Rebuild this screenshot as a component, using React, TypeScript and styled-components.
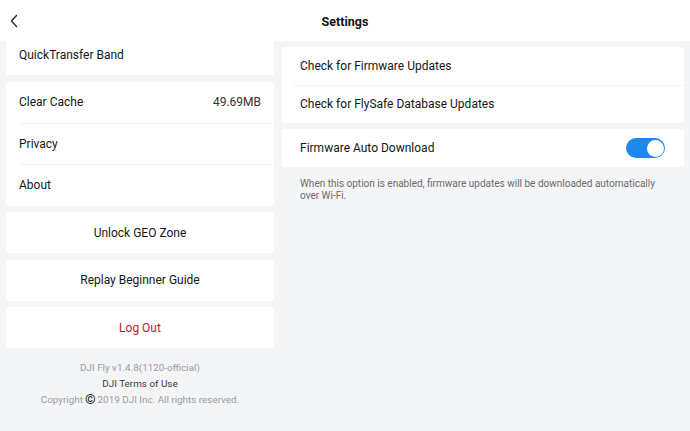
import React, { useState } from "react";
import styled, { createGlobalStyle } from "styled-components";

const Global = createGlobalStyle`
  html, body { margin: 0; padding: 0; background: #f4f5f7; }
  body { font-family: Roboto, "Noto Sans", "Liberation Sans", sans-serif; color: #1a1a1a; -webkit-font-smoothing: antialiased; }
  * { box-sizing: border-box; }
`;

const Page = styled.div`
  width: 690px;
  height: 431px;
  display: flex;
  flex-direction: column;
  background: #f4f5f7;
  overflow: hidden;
`;

const Header = styled.header`
  height: 41px;
  flex: none;
  background: #ffffff;
  display: grid;
  grid-template-columns: 40px 1fr 40px;
  align-items: center;
`;

const BackButton = styled.button`
  border: 0;
  background: none;
  padding: 0 0 0 9px;
  height: 41px;
  display: flex;
  align-items: center;
  cursor: pointer;
`;

const Title = styled.h1`
  margin: 0;
  padding-top: 1px;
  text-align: center;
  font-size: 12.5px;
  font-weight: 700;
  color: #111;
`;

const Body = styled.main`
  flex: 1;
  display: grid;
  grid-template-columns: 268px 402px;
  column-gap: 8px;
  padding: 0 6px;
  min-height: 0;
`;

const LeftScroll = styled.section`
  overflow: hidden;
  display: flex;
  flex-direction: column;
  gap: 6.5px;
  & > :first-child { margin-top: -7px; }
`;

const RightCol = styled.section`
  padding-top: 6px;
  display: flex;
  flex-direction: column;
  gap: 6px;
`;

const Card = styled.div`
  background: #ffffff;
  border-radius: 3px;
  display: flex;
  flex-direction: column;
`;

const Row = styled.div<{ $h?: number; $pad?: number; $inset?: number }>`
  height: ${(p) => p.$h ?? 41.3}px;
  display: flex;
  align-items: center;
  justify-content: space-between;
  padding: 0 ${(p) => p.$pad ?? 13}px;
  font-size: 12px;
  color: #161616;
  position: relative;
  & + &::before {
    content: "";
    position: absolute;
    top: 0;
    left: ${(p) => p.$inset ?? 14}px;
    right: 0;
    height: 1px;
    background: #f2f3f5;
  }
`;

const Value = styled.span`
  font-size: 12px;
  color: #333;
`;

const ActionButton = styled.button<{ $danger?: boolean }>`
  height: 41px;
  border: 0;
  border-radius: 3px;
  background: #ffffff;
  font-family: inherit;
  font-size: 12px;
  color: ${(p) => (p.$danger ? "#bd1a21" : "#161616")};
  cursor: pointer;
`;

const Footer = styled.footer`
  padding-top: 5px;
  display: flex;
  flex-direction: column;
  align-items: center;
  font-size: 9.9px;
  line-height: 16px;
  color: #9c9c9c;
`;

const Terms = styled.span`
  color: #3a3a3a;
`;

const CopyMark = styled.span`
  font-size: 13.5px;
  line-height: 10px;
  font-weight: 700;
  color: #111;
  margin: 0 2px 0 2px;
  vertical-align: -1px;
`;

const Note = styled.p`
  margin: 5px 0 0;
  padding: 0 18px;
  font-size: 10px;
  line-height: 12px;
  color: #6b6b6b;
`;

const Switch = styled.button<{ $on: boolean }>`
  width: 39px;
  height: 20px;
  border-radius: 10px;
  border: 0;
  padding: 0;
  background: ${(p) => (p.$on ? "#1e88ef" : "#d0d3d8")};
  position: relative;
  cursor: pointer;
  margin-right: 1px;
`;

const Knob = styled.span<{ $on: boolean }>`
  position: absolute;
  top: 1.5px;
  left: ${(p) => (p.$on ? "20.5px" : "1.5px")};
  width: 17px;
  height: 17px;
  border-radius: 50%;
  background: #fff;
`;

export default function App() {
  const [auto, setAuto] = useState(true);
  return (
    <>
      <Global />
      <Page>
        <Header>
          <BackButton aria-label="Back">
            <svg width="10" height="14" viewBox="0 0 10 14" fill="none">
              <path d="M7.5 1.5 L2.5 7 L7.5 12.5" stroke="#222" strokeWidth="1.3" strokeLinecap="round" strokeLinejoin="round" />
            </svg>
          </BackButton>
          <Title>Settings</Title>
          <span />
        </Header>
        <Body>
          <LeftScroll>
            <Card>
              <Row>QuickTransfer Band</Row>
            </Card>
            <Card>
              <Row>
                Clear Cache
                <Value>49.69MB</Value>
              </Row>
              <Row>Privacy</Row>
              <Row>About</Row>
            </Card>
            <ActionButton>Unlock GEO Zone</ActionButton>
            <ActionButton>Replay Beginner Guide</ActionButton>
            <ActionButton $danger>Log Out</ActionButton>
            <Footer>
              <span>DJI Fly v1.4.8(1120-official)</span>
              <Terms>DJI Terms of Use</Terms>
              <span>
                Copyright<CopyMark>©</CopyMark>2019 DJI Inc. All rights reserved.
              </span>
            </Footer>
          </LeftScroll>
          <RightCol>
            <Card>
              <Row $h={38} $pad={18} $inset={11}>Check for Firmware Updates</Row>
              <Row $h={38} $pad={18} $inset={11}>Check for FlySafe Database Updates</Row>
            </Card>
            <Card>
              <Row $h={38} $pad={18}>
                Firmware Auto Download
                <Switch $on={auto} onClick={() => setAuto(!auto)} aria-label="Firmware Auto Download">
                  <Knob $on={auto} />
                </Switch>
              </Row>
            </Card>
            <Note>
              When this option is enabled, firmware updates will be downloaded automatically over Wi-Fi.
            </Note>
          </RightCol>
        </Body>
      </Page>
    </>
  );
}
